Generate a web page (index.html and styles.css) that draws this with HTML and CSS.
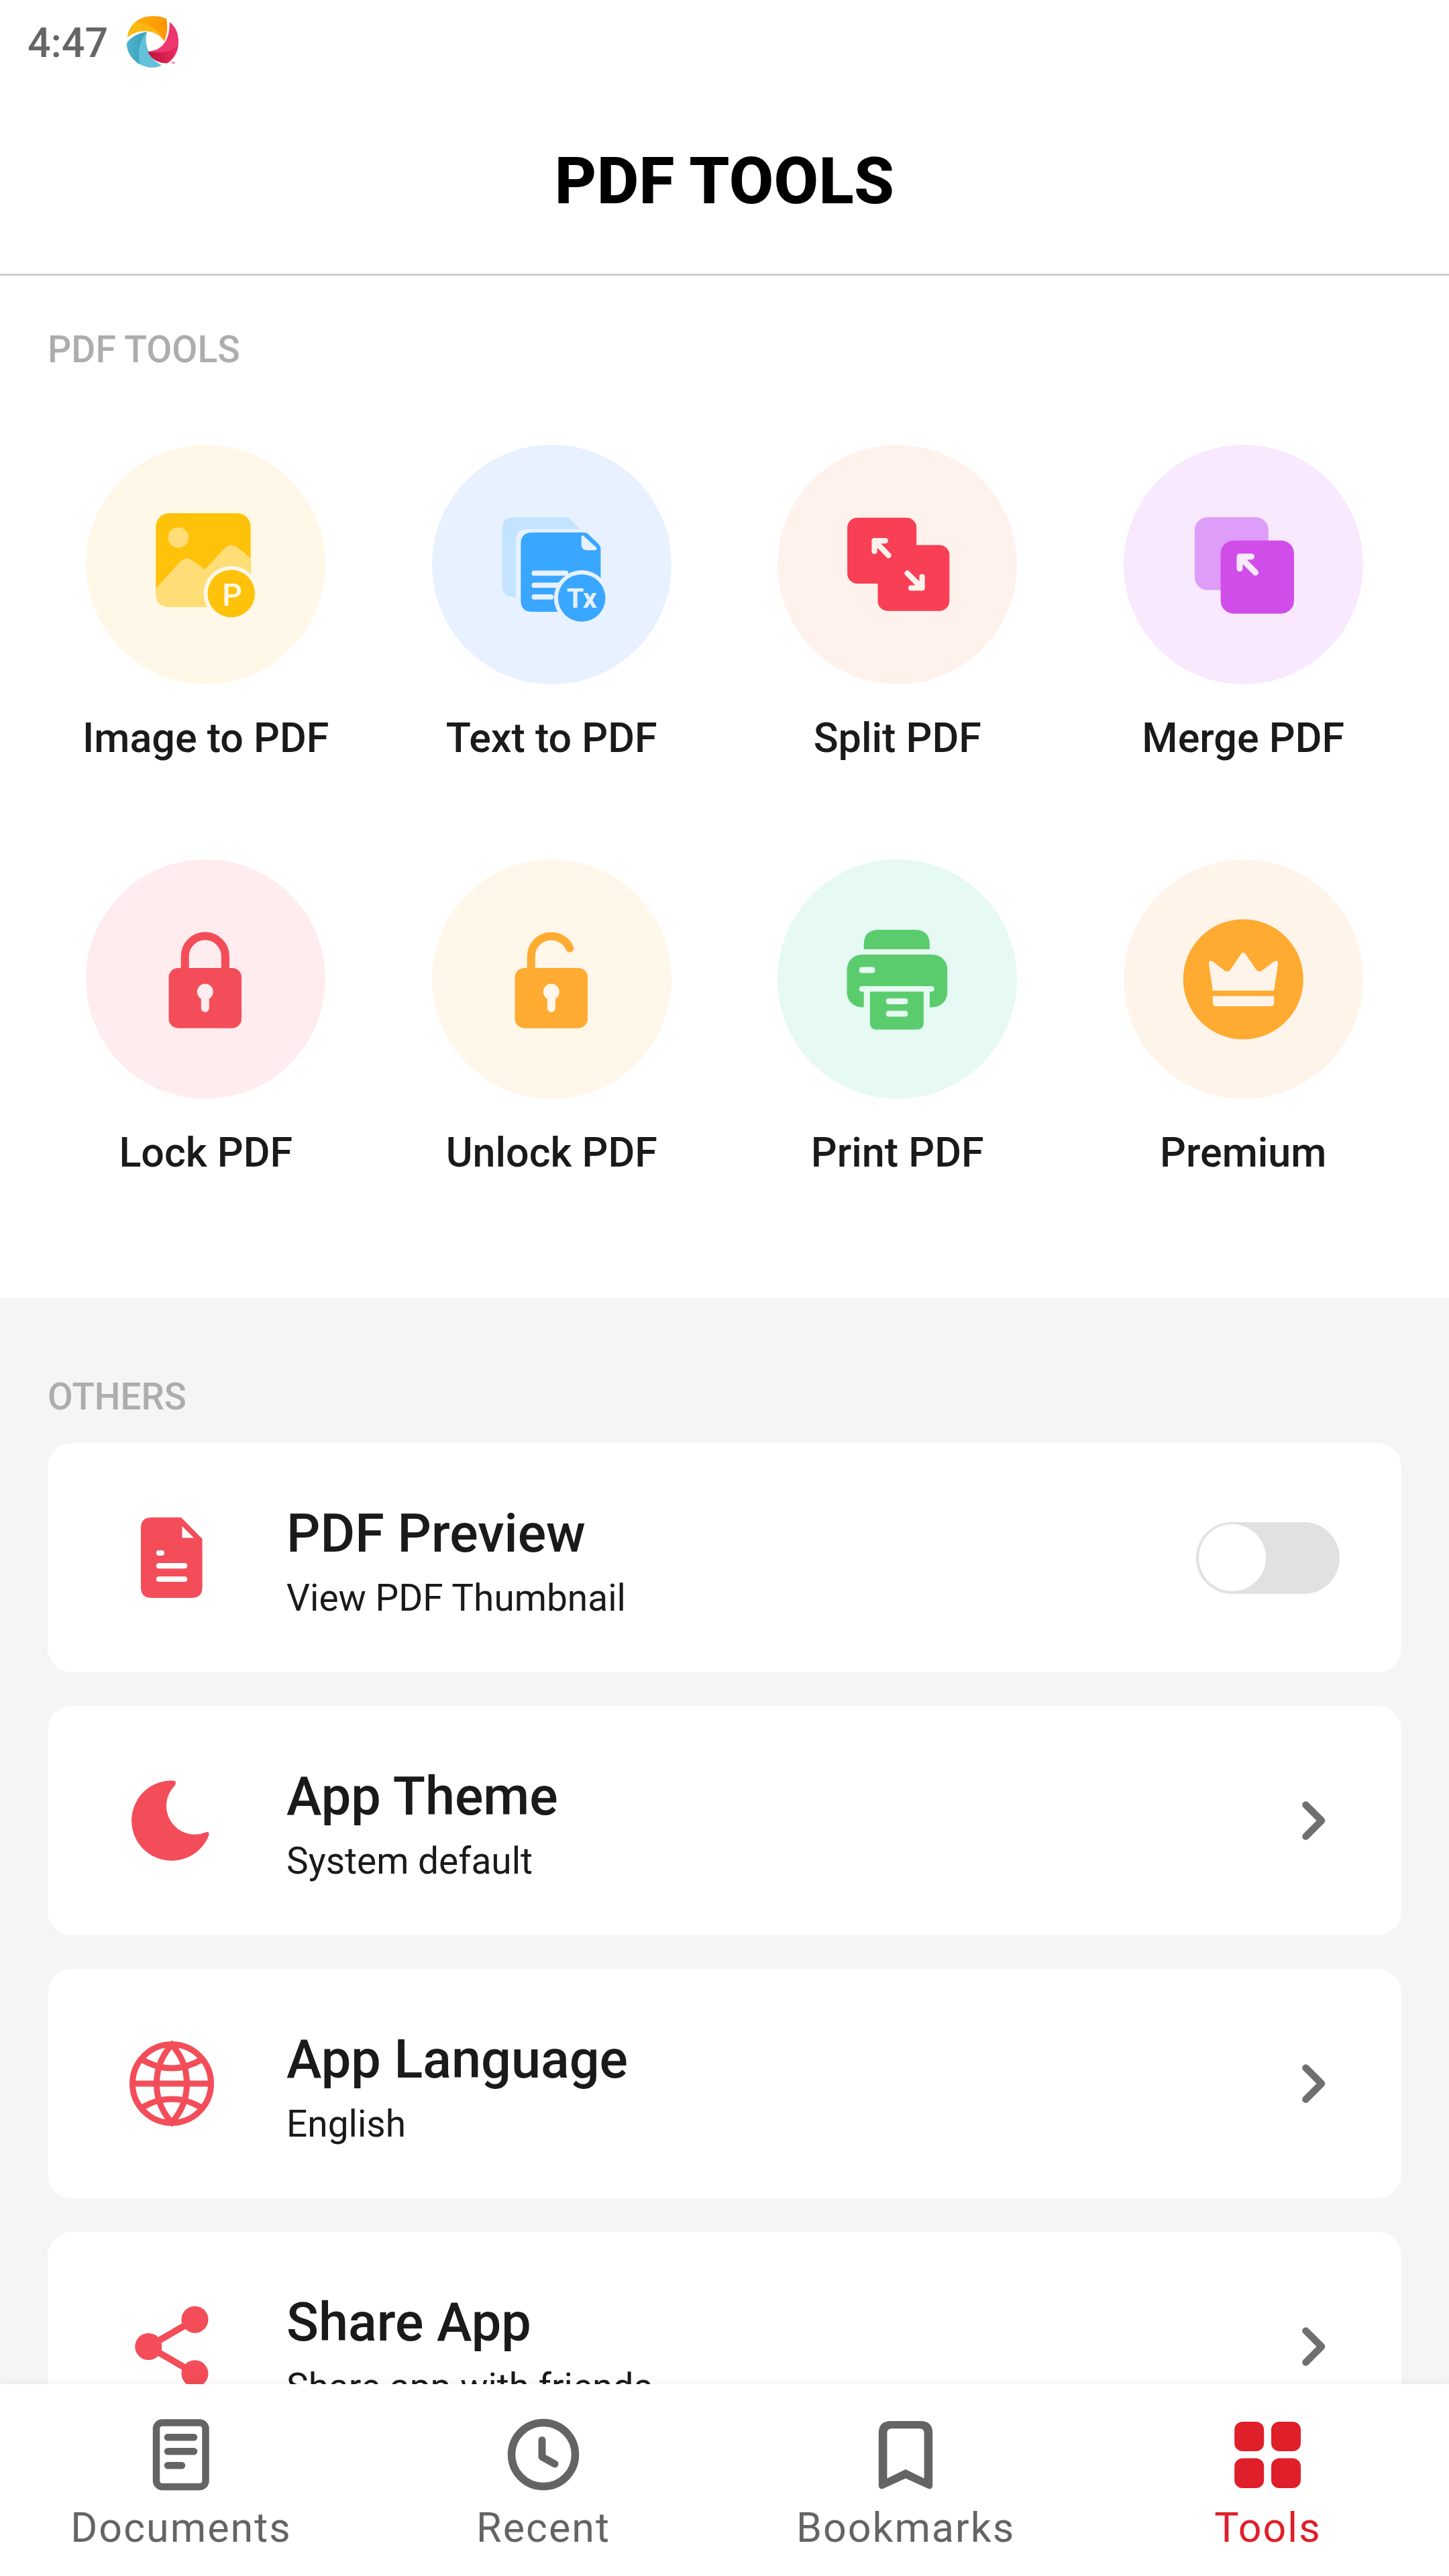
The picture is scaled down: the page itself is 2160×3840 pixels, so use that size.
FILE: index.html
```html
<!DOCTYPE html>
<html lang="en">
<head>
<meta charset="utf-8">
<title>PDF Tools</title>
<link rel="stylesheet" href="styles.css">
</head>
<body>
<div class="screen">
  <div class="status-bar">
    <span class="clock">4:47</span>
    <svg class="app-badge" viewBox="0 0 288 288">
      <defs>
        <linearGradient id="gy" x1="0" x2="1"><stop offset="0" stop-color="#fcb414"/><stop offset="1" stop-color="#ff9500"/></linearGradient>
        <linearGradient id="gb" x1="0" x2="1"><stop offset="0" stop-color="#4fb3cd"/><stop offset="1" stop-color="#379fba"/></linearGradient>
        <linearGradient id="gp" x1="0" x2="1"><stop offset="0" stop-color="#bd1238"/><stop offset="1" stop-color="#ea2c62"/></linearGradient>
      </defs>
      <path fill="url(#gy)" d="M30 122C34 70 80 27 140 27C165 27 185 30 204 38C211 70 210 105 194 139C160 85 80 80 30 122Z"/>
      <path fill="#fdb913" d="M30 122C34 98 45 77 62 58C110 55 172 82 194 139C160 85 80 80 30 122Z"/>
      <path fill="#63c1da" d="M27 148C45 120 80 102 117 98C105 140 118 215 183 246C160 262 120 262 80 240C45 215 27 185 27 148Z"/>
      <path fill="url(#gb)" d="M27 148C45 120 80 102 117 98C86 130 76 180 84 242C45 218 27 185 27 148Z"/>
      <path fill="#ee366f" d="M218 53C248 78 258 105 258 145C258 185 235 222 207 238C170 238 135 218 121 185C170 185 222 150 218 53Z"/>
      <path fill="url(#gp)" d="M121 185C170 195 222 190 257 157C253 192 235 222 207 238C170 238 135 218 121 185Z"/>
      <text class="badge-tm" x="226" y="240">TM</text>
    </svg>
  </div>

  <header class="app-header"><h1>PDF TOOLS</h1></header>

  <section class="tools">
    <h2 class="section-label">PDF TOOLS</h2>
    <div class="tool-grid">
      <div class="tool">
        <svg class="tool-icon image" viewBox="0 0 356 356">
          <rect x="104" y="101.8" width="141" height="139.5" rx="20" fill="#ffc20a"/>
          <circle cx="137.4" cy="138" r="15.2" fill="#ffdd77"/>
          <path fill="#ffdd77" d="M104 213.5L140.5 173.5Q150.5 164.5 160.5 173.5L177 185.5L206 154Q216 144.5 226 153L245 168.8V221.3Q245 241.3 225 241.3H124Q104 241.3 104 221.3Z"/>
          <circle cx="216.1" cy="221.2" r="41" fill="#fff8e8"/>
          <circle cx="216.1" cy="221.2" r="35.2" fill="#ffc20a"/>
          <text class="badge-text" x="217.6" y="239" font-size="46" fill="#fff8e8">P</text>
        </svg>
        <span class="tool-name">Image to PDF</span>
      </div>
      <div class="tool">
        <svg class="tool-icon text" viewBox="0 0 356 356">
          <path fill="#c4e3ff" d="M121 107.8H198Q203 107.8 206 111L219.5 125.5H142Q124.6 125.5 124.6 143V226H121Q104.4 226 104.4 209V124.8Q104.4 107.8 121 107.8Z"/>
          <path fill="#39a6ff" d="M149 130.3H225Q230 130.3 233 133.5L248 148Q250.7 151 250.7 155V248.4H149Q132 248.4 132 231.4V147.3Q132 130.3 149 130.3Z"/>
          <path fill="#e7f1ff" d="M222 137Q222.5 133 226 136L244 152.5Q246.5 156.8 242 156.8H231Q222 156.8 222 148Z"/>
          <path d="M152 190.9H199M152 208.8H192M152 226.3H177" stroke="#e7f1ff" stroke-width="7.8" stroke-linecap="round"/>
          <circle cx="222.5" cy="227.8" r="41.2" fill="#e7f1ff"/>
          <circle cx="222.5" cy="227.8" r="35.2" fill="#39a6ff"/>
          <text class="badge-text bold" x="222.5" y="242.4" font-size="41" fill="#e7f1ff">Tx</text>
        </svg>
        <span class="tool-name">Text to PDF</span>
      </div>
      <div class="tool">
        <svg class="tool-icon split" viewBox="0 0 356 356">
          <rect x="103.8" y="108.4" width="102.8" height="98" rx="15" fill="#f93f55"/>
          <rect x="149" y="149" width="106.6" height="98" rx="15" fill="#f93f55"/>
          <path class="arrow" stroke="#fff2ec" stroke-width="8.2" d="M160.3 142.7H144.1V158.4M144.1 142.7L165 164.5M214.9 196.3V212.9H198.5M214.9 212.9L193 191"/>
        </svg>
        <span class="tool-name">Split PDF</span>
      </div>
      <div class="tool">
        <svg class="tool-icon merge" viewBox="0 0 356 356">
          <rect x="105.6" y="107.8" width="109.6" height="108.2" rx="19" fill="#dd9df8"/>
          <rect x="144.2" y="142.3" width="109" height="108.7" rx="19" fill="#d14de9"/>
          <path class="arrow" stroke="#f8e9fe" stroke-width="9" d="M190 166.3H172.5V184M172.5 166.3L196 190"/>
        </svg>
        <span class="tool-name">Merge PDF</span>
      </div>
      <div class="tool">
        <svg class="tool-icon lock" viewBox="0 0 356 356">
          <path d="M147.3 166V144A30 30 0 0 1 207.3 144V166" fill="none" stroke="#f34d59" stroke-width="12"/>
          <rect x="123.2" y="161.5" width="108.2" height="89.5" rx="14" fill="#f34d59"/>
          <circle cx="177.3" cy="197" r="11.9" fill="#ffecee"/>
          <path d="M177.3 202V221" stroke="#ffecee" stroke-width="12" stroke-linecap="round"/>
        </svg>
        <span class="tool-name">Lock PDF</span>
      </div>
      <div class="tool">
        <svg class="tool-icon unlock" viewBox="0 0 356 356">
          <path d="M147.3 166V144A30 30 0 0 1 204.8 132.2" fill="none" stroke="#ffab31" stroke-width="12" stroke-linecap="round"/>
          <rect x="123.2" y="161.5" width="108.2" height="89.5" rx="14" fill="#ffab31"/>
          <circle cx="177.3" cy="197" r="11.9" fill="#fff7ea"/>
          <path d="M177.3 202V221" stroke="#fff7ea" stroke-width="12" stroke-linecap="round"/>
        </svg>
        <span class="tool-name">Unlock PDF</span>
      </div>
      <div class="tool">
        <svg class="tool-icon print" viewBox="0 0 356 356">
          <path fill="#5bcc6d" d="M128.3 133.6V127Q128.3 104.8 150.5 104.8H204Q226.2 104.8 226.2 127V133.6Z"/>
          <rect x="103.2" y="141.6" width="149.3" height="78.3" rx="22" fill="#5bcc6d"/>
          <rect x="121.5" y="188.4" width="111.5" height="8.2" rx="4" fill="#e6f9f3"/>
          <rect x="128.3" y="193" width="97.9" height="30" fill="#e6f9f3"/>
          <path fill="#5bcc6d" d="M137.4 196.6H217.2V243Q217.2 253 207.2 253H147.4Q137.4 253 137.4 243Z"/>
          <rect x="121.5" y="160" width="23.5" height="9" rx="4" fill="#e6f9f3"/>
          <rect x="161.3" y="206.6" width="32.5" height="8.7" rx="4" fill="#e6f9f3"/>
          <rect x="161.3" y="225.2" width="32.5" height="8.7" rx="4" fill="#e6f9f3"/>
        </svg>
        <span class="tool-name">Print PDF</span>
      </div>
      <div class="tool">
        <svg class="tool-icon premium" viewBox="0 0 356 356">
          <circle cx="177.8" cy="178.3" r="89.3" fill="#ffab31"/>
          <path fill="#fff4ea" d="M126.5 154.5Q127 149 132 151.5L150.5 165.5Q154.5 168 158 165L174.5 140.5Q177.8 136.8 181.1 140.5L197.6 165Q201.5 168 205.5 165.5L224 151.5Q229.5 149 229.5 154.5L223.5 195.3H132.5Z"/>
          <path fill="#fff4ea" d="M132.5 203.3H223.5V213.3Q223.5 218.3 218.5 218.3H137.5Q132.5 218.3 132.5 213.3Z"/>
        </svg>
        <span class="tool-name">Premium</span>
      </div>
    </div>
  </section>

  <section class="others">
    <h2 class="section-label">OTHERS</h2>
    <div class="card-list">
      <div class="card">
        <svg class="card-icon" viewBox="-80 -80 160 160">
          <path fill="#f34d59" d="M-30-60H14L45.6-28V44Q45.6 60 29.6 60H-30Q-46 60-46 44V-44Q-46-60-30-60Z"/>
          <path fill="#fff" d="M15.5-47L33-29.4H15.5Z"/>
          <path d="M-19-7H-15M-19 12.2H19M-19 32H19" stroke="#fff" stroke-width="8.2" stroke-linecap="round"/>
        </svg>
        <div class="card-text"><span class="card-title">PDF Preview</span><span class="card-sub">View PDF Thumbnail</span></div>
        <span class="toggle"><span class="thumb"></span></span>
      </div>
      <div class="card">
        <svg class="card-icon" viewBox="-80 -80 160 160">
          <path fill="#f34d59" d="M0-59.7A59.7 59.7 0 1 0 55.3 22Q56.5 15.5 50.5 17.5A42.5 42.5 0 0 1 4.5-52Q9-60 0-59.7Z"/>
        </svg>
        <div class="card-text"><span class="card-title">App Theme</span><span class="card-sub">System default</span></div>
        <svg class="chevron" viewBox="-24 -32 48 64"><path d="M-11.5-23.5L12 0L-11.5 23.5"/></svg>
      </div>
      <div class="card">
        <svg class="card-icon" viewBox="-80 -80 160 160">
          <g fill="none" stroke="#f34d59" stroke-width="9">
            <circle r="58.5"/>
            <path d="M-58 0H58M0-58C-30-25-30 25 0 58C30 25 30-25 0-58ZM-45-36Q0-10 45-36M-45 36Q0 10 45 36"/>
          </g>
        </svg>
        <div class="card-text"><span class="card-title">App Language</span><span class="card-sub">English</span></div>
        <svg class="chevron" viewBox="-24 -32 48 64"><path d="M-11.5-23.5L12 0L-11.5 23.5"/></svg>
      </div>
      <div class="card">
        <svg class="card-icon" viewBox="-80 -80 160 160">
          <path d="M34.5-40L-34.7 0L34.5 40" fill="none" stroke="#f34d59" stroke-width="10"/>
          <g fill="#f34d59"><circle cx="34.5" cy="-40.3" r="20"/><circle cx="-34.7" r="20"/><circle cx="34.5" cy="40.3" r="20"/></g>
        </svg>
        <div class="card-text"><span class="card-title">Share App</span><span class="card-sub">Share app with friends</span></div>
        <svg class="chevron" viewBox="-24 -32 48 64"><path d="M-11.5-23.5L12 0L-11.5 23.5"/></svg>
      </div>
    </div>
  </section>

  <nav class="bottom-nav">
    <a class="nav-item">
      <svg viewBox="-64 -64 128 128">
        <rect x="-37" y="-47.5" width="73.5" height="95.5" rx="9" fill="none" stroke="currentColor" stroke-width="10.5"/>
        <path d="M-20-25.8H19M-20-4.7H19M-20 16.3H1" stroke="currentColor" stroke-width="10.5" stroke-linecap="round"/>
      </svg>
      <span>Documents</span>
    </a>
    <a class="nav-item">
      <svg viewBox="-64 -64 128 128">
        <circle r="47.5" fill="none" stroke="currentColor" stroke-width="11.5"/>
        <path d="M-2-21.5V3.5L17 14" fill="none" stroke="currentColor" stroke-width="11" stroke-linecap="round" stroke-linejoin="round"/>
      </svg>
      <span>Recent</span>
    </a>
    <a class="nav-item">
      <svg viewBox="-64 -64 128 128">
        <path fill="currentColor" fill-rule="evenodd" d="M-40.2-32Q-40.2-50-22.2-50H22.2Q40.2-50 40.2-32V46.5Q39 53 33 50.5L0 35.5L-33 50.5Q-39 53-40.2 46.5ZM-27.6-32V35.5L0 22L27.6 35.5V-32Q27.6-38.7 21-38.7H-21Q-27.6-38.7-27.6-32Z"/>
      </svg>
      <span>Bookmarks</span>
    </a>
    <a class="nav-item active">
      <svg viewBox="-64 -64 128 128">
        <g fill="currentColor">
          <rect x="-49.8" y="-49" width="44" height="44" rx="12"/><rect x="5" y="-49" width="44" height="44" rx="12"/>
          <rect x="-49.8" y="5.5" width="44" height="44.5" rx="12"/><rect x="5" y="5.5" width="44" height="44.5" rx="12"/>
        </g>
      </svg>
      <span>Tools</span>
    </a>
  </nav>
</div>
</body>
</html>
```
FILE: styles.css
```css
* { box-sizing: border-box; }

body {
  margin: 0;
  font-family: Roboto, sans-serif;
  color: #1a1a1a;
  background: #fff;
}

h1, h2 { margin: 0; }

.screen {
  width: 2160px;
  height: 3840px;
  overflow: hidden;
  display: flex;
  flex-direction: column;
}

.status-bar {
  flex: none;
  height: 132px;
  padding: 0 0 4px 41px;
  display: flex;
  align-items: center;
  gap: 19px;
}

.clock {
  font-size: 61px;
  line-height: 70px;
  font-weight: 500;
  color: #666;
}

.app-badge { width: 96px; height: 96px; margin-bottom: 3px; }
.badge-tm { font-size: 11px; font-weight: 700; fill: #ee366f; }

.app-header {
  flex: none;
  height: 279px;
  border-bottom: 3px solid #cecece;
  display: flex;
  align-items: center;
  justify-content: center;
}

.app-header h1 {
  font-size: 96.5px;
  line-height: 112px;
  font-weight: 800;
  letter-spacing: 0.3px;
  color: #000;
}

.section-label {
  font-size: 55.3px;
  line-height: 66px;
  font-weight: 500;
  color: #adadad;
}

.tools {
  flex: none;
  height: 1524px;
  padding: 78px 49px 0;
}

.tools .section-label { padding-left: 22px; }

.tool-grid {
  margin-top: 108px;
  display: grid;
  grid-template-columns: repeat(4, 1fr);
  row-gap: 146px;
}

.tool {
  display: flex;
  flex-direction: column;
  align-items: center;
  gap: 45px;
}

.tool-icon {
  width: 357px;
  height: 357px;
  border-radius: 50%;
}

.image { background: #fff8e8; }
.text { background: #e7f1ff; }
.split { background: #fff2ec; }
.merge { background: #f8e9fe; }
.lock { background: #ffecee; }
.unlock { background: #fff7ea; }
.print { background: #e6f9f3; }
.premium { background: #fff4ea; }

.badge-text { text-anchor: middle; font-weight: 500; }
.badge-text.bold { font-weight: 700; }

.arrow { fill: none; stroke-linecap: round; stroke-linejoin: round; }

.tool-name {
  font-size: 61px;
  line-height: 70px;
  font-weight: 500;
  white-space: nowrap;
}

.others {
  flex: none;
  height: 1619px;
  padding: 114px 71px 0;
  background: #f5f5f5;
  overflow: hidden;
}

.others .section-label { font-size: 54.7px; }

.card-list {
  margin-top: 36px;
  display: flex;
  flex-direction: column;
  gap: 50px;
}

.card {
  height: 342px;
  border-radius: 36px;
  background: #fff;
  padding-left: 105px;
  display: flex;
  align-items: center;
}

.card-icon { width: 160px; height: 160px; flex: none; }

.card-text {
  flex: 1;
  margin-left: 91px;
  padding-top: 9px;
  display: flex;
  flex-direction: column;
  gap: 16px;
}

.card-title { font-size: 79.2px; line-height: 94px; font-weight: 500; }
.card-sub { font-size: 55px; line-height: 66px; }

.toggle {
  width: 214px;
  height: 107px;
  margin-right: 92px;
  padding: 3.5px;
  border-radius: 54px;
  background: #e1e1e1;
}

.thumb {
  display: block;
  width: 100px;
  height: 100px;
  border-radius: 50%;
  background: #fff;
}

.chevron { width: 48px; height: 64px; margin-right: 107px; }

.chevron path {
  fill: none;
  stroke: #6f6f6f;
  stroke-width: 10.5;
  stroke-linecap: round;
  stroke-linejoin: round;
}

.bottom-nav {
  flex: none;
  height: 286px;
  padding-top: 41px;
  background: #fff;
  box-shadow: 0 0 16px rgba(0, 0, 0, .07);
  position: relative;
  display: grid;
  grid-template-columns: repeat(4, 1fr);
}

.nav-item {
  display: flex;
  flex-direction: column;
  align-items: center;
  gap: 10px;
  font-size: 61px;
  line-height: 70px;
  letter-spacing: 2px;
  color: #646464;
}

.nav-item svg { width: 128px; height: 128px; }
.nav-item.active { color: #df1f29; }
```
